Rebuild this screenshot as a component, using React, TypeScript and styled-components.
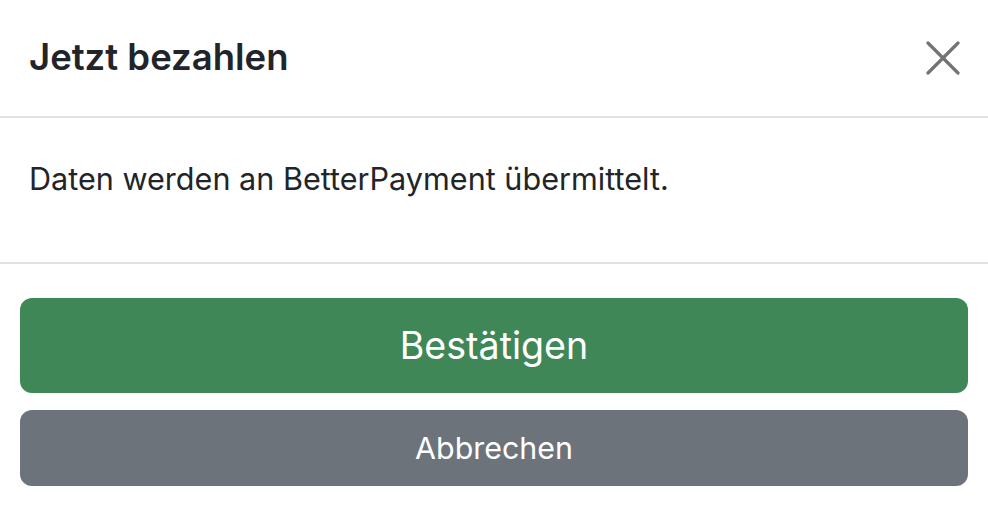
import styled, { createGlobalStyle } from "styled-components";

const GlobalStyle = createGlobalStyle`
  body {
    margin: 0;
    background: #ffffff;
    font-family: Inter, "Liberation Sans", Arial, sans-serif;
    color: #212529;
  }
`;

const Modal = styled.div`
  width: 988px;
  height: 506px;
  display: flex;
  flex-direction: column;
  background: #ffffff;
`;

const Header = styled.div`
  height: 118px;
  display: flex;
  align-items: center;
  justify-content: space-between;
  padding: 0 28px 0 29px;
  border-bottom: 2px solid #dee2e6;
  box-sizing: border-box;
`;

const Title = styled.h5`
  margin: 0 0 1px;
  font-size: 36.5px;
  font-weight: 600;
  line-height: 1;
  color: #212529;
`;

const CloseButton = styled.button`
  width: 34px;
  height: 34px;
  padding: 0;
  border: none;
  background: transparent;
  display: flex;
  align-items: center;
  justify-content: center;
  cursor: pointer;
`;

const Body = styled.div`
  height: 146px;
  padding: 43px 29px 0;
  border-bottom: 2px solid #dee2e6;
  box-sizing: border-box;
  font-size: 30.6px;
  line-height: 1.2;
`;

const Footer = styled.div`
  display: flex;
  flex-direction: column;
  gap: 17px;
  padding: 34px 20px 0;
`;

const Button = styled.button<{ variant: "success" | "secondary" }>`
  width: 100%;
  border: none;
  border-radius: 12px;
  color: #ffffff;
  font-family: Inter, "Liberation Sans", Arial, sans-serif;
  cursor: pointer;
  padding: 0;
  background: ${(p) => (p.variant === "success" ? "#408758" : "#6c737b")};
  height: ${(p) => (p.variant === "success" ? "95px" : "76px")};
  font-size: ${(p) => (p.variant === "success" ? "37.6px" : "30.4px")};
`;

export default function App() {
  return (
    <>
      <GlobalStyle />
      <Modal>
        <Header>
          <Title>Jetzt bezahlen</Title>
          <CloseButton aria-label="Schließen">
            <svg width="34" height="34" viewBox="0 0 34 34">
              <path
                d="M2 2 L32 32 M32 2 L2 32"
                stroke="#737373"
                strokeWidth="3.2"
                strokeLinecap="round"
              />
            </svg>
          </CloseButton>
        </Header>
        <Body>Daten werden an BetterPayment übermittelt.</Body>
        <Footer>
          <Button variant="success">Bestätigen</Button>
          <Button variant="secondary">Abbrechen</Button>
        </Footer>
      </Modal>
    </>
  );
}
